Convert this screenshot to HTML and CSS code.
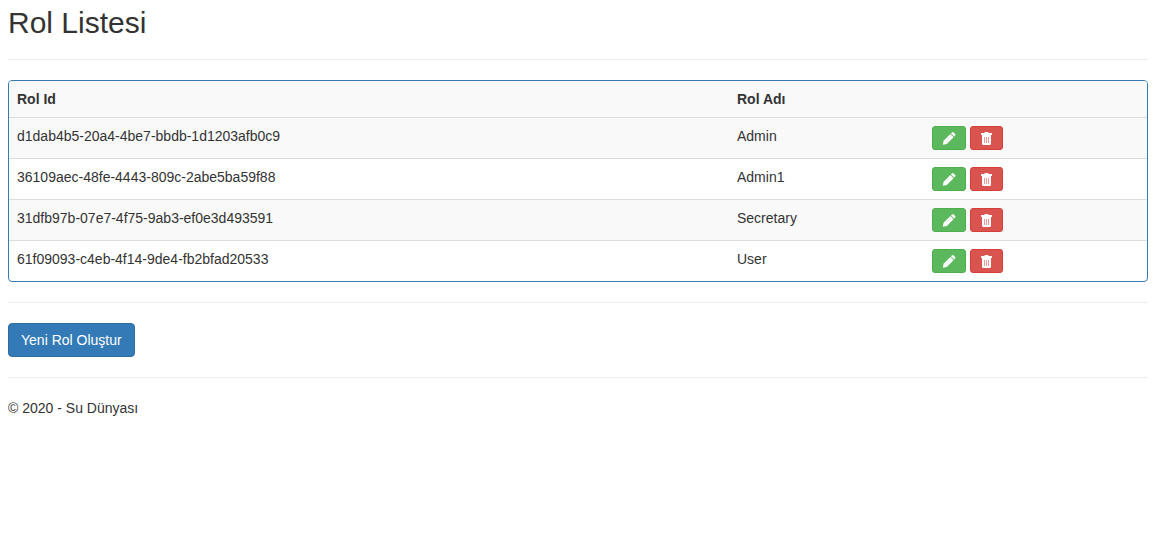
FILE: index.html
```html
<!DOCTYPE html>
<html lang="tr">
<head>
<meta charset="utf-8">
<meta name="viewport" content="width=device-width, initial-scale=1">
<title>Rol Listesi</title>
<link rel="stylesheet" href="styles.css">
</head>
<body>
<svg class="sprite" aria-hidden="true">
  <symbol id="pencil" viewBox="0 0 14 14">
    <path d="M.8 13.8 1.6 9.8 8.4 3 11.6 6.2 4.8 13Z"/>
    <path d="M9 2.4 10 1.4Q10.8.7 11.6 1.4L13.2 3Q13.9 3.8 13.2 4.6L12.2 5.6Z"/>
    <path class="shade" d="M3.6 10.2 8.8 5"/>
  </symbol>
  <symbol id="trash" viewBox="0 0 13 14">
    <path d="M2 4H11V12.5Q11 14 9.5 14H3.5Q2 14 2 12.5Z"/>
    <path fill-rule="evenodd" d="M1 4V2.6Q1 2 1.6 2H4.5V1.6Q4.5 1 5.1 1H7.9Q8.5 1 8.5 1.6V2H11.4Q12 2 12 2.6V4Z"/>
    <path class="slots" d="M4.5 6V12M6.5 6V12M8.5 6V12"/>
  </symbol>
</svg>
<main class="page">
  <h2 class="title">Rol Listesi</h2>
  <hr class="rule">
  <div class="panel">
    <table class="table">
      <thead>
        <tr><th class="col-id" scope="col">Rol Id</th><th class="col-name" scope="col">Rol Adı</th><td></td></tr>
      </thead>
      <tbody>
        <tr>
          <td>d1dab4b5-20a4-4be7-bbdb-1d1203afb0c9</td><td>Admin</td>
          <td><div class="actions"><a class="btn btn-small btn-edit" href="#" aria-label="Düzenle"><svg class="icon-pencil"><use href="#pencil"/></svg></a><button class="btn btn-small btn-delete" type="button" aria-label="Sil"><svg class="icon-trash"><use href="#trash"/></svg></button></div></td>
        </tr>
        <tr>
          <td>36109aec-48fe-4443-809c-2abe5ba59f88</td><td>Admin1</td>
          <td><div class="actions"><a class="btn btn-small btn-edit" href="#" aria-label="Düzenle"><svg class="icon-pencil"><use href="#pencil"/></svg></a><button class="btn btn-small btn-delete" type="button" aria-label="Sil"><svg class="icon-trash"><use href="#trash"/></svg></button></div></td>
        </tr>
        <tr>
          <td>31dfb97b-07e7-4f75-9ab3-ef0e3d493591</td><td>Secretary</td>
          <td><div class="actions"><a class="btn btn-small btn-edit" href="#" aria-label="Düzenle"><svg class="icon-pencil"><use href="#pencil"/></svg></a><button class="btn btn-small btn-delete" type="button" aria-label="Sil"><svg class="icon-trash"><use href="#trash"/></svg></button></div></td>
        </tr>
        <tr>
          <td>61f09093-c4eb-4f14-9de4-fb2bfad20533</td><td>User</td>
          <td><div class="actions"><a class="btn btn-small btn-edit" href="#" aria-label="Düzenle"><svg class="icon-pencil"><use href="#pencil"/></svg></a><button class="btn btn-small btn-delete" type="button" aria-label="Sil"><svg class="icon-trash"><use href="#trash"/></svg></button></div></td>
        </tr>
      </tbody>
    </table>
  </div>
  <hr class="rule">
  <a class="btn btn-primary" href="#">Yeni Rol Oluştur</a>
  <hr class="rule">
  <footer class="footer">© 2020 - Su Dünyası</footer>
</main>
</body>
</html>
```

FILE: styles.css
```css
* {
  box-sizing: border-box;
}

body {
  margin: 0;
  background: #fff;
  color: #333;
  font: 14px/20px "Liberation Sans", Arial, sans-serif;
}

.sprite {
  position: absolute;
  width: 0;
  height: 0;
}

.page {
  padding: 6px 14px 20px 8px;
}

.title {
  margin: 0;
  font-size: 30px;
  font-weight: 500;
  line-height: 33px;
}

.rule {
  height: 1px;
  margin: 20px 0;
  border: 0;
  background: #eee;
}

.panel {
  overflow: hidden;
  border: 1px solid #337ab7;
  border-radius: 4px;
}

.table {
  width: 100%;
  border-spacing: 0;
  table-layout: fixed;
}

.table th,
.table td {
  padding: 8px;
  text-align: left;
  vertical-align: top;
}

.table tbody td {
  border-top: 1px solid #ddd;
}

.table thead tr,
.table tbody tr:nth-child(odd) {
  background: #f9f9f9;
}

.table .col-id {
  width: 63.27%;
}

.table .col-name {
  width: 17.14%;
}

.actions {
  display: flex;
  gap: 4px;
}

.btn {
  display: inline-flex;
  align-items: center;
  justify-content: center;
  padding: 6px 12px;
  border: 1px solid transparent;
  border-radius: 4px;
  color: #fff;
  font: inherit;
  text-decoration: none;
  cursor: pointer;
}

.btn-small {
  height: 24px;
  padding: 0 9px;
  border-radius: 3px;
}

.btn-primary {
  display: flex;
  width: fit-content;
  background: #337ab7;
  border-color: #2e6da4;
}

.btn-edit {
  background: #5cb85c;
  border-color: #4cae4c;
}

.btn-delete {
  background: #d9534f;
  border-color: #d43f3a;
}

.icon-pencil {
  width: 14px;
  height: 14px;
  fill: currentColor;
}

.icon-trash {
  width: 13px;
  height: 14px;
  fill: currentColor;
}

.shade {
  fill: none;
  stroke: #c5e6c5;
  stroke-width: 0.6;
}

.slots {
  fill: none;
  stroke: #e99a98;
  stroke-width: 1;
}
```
